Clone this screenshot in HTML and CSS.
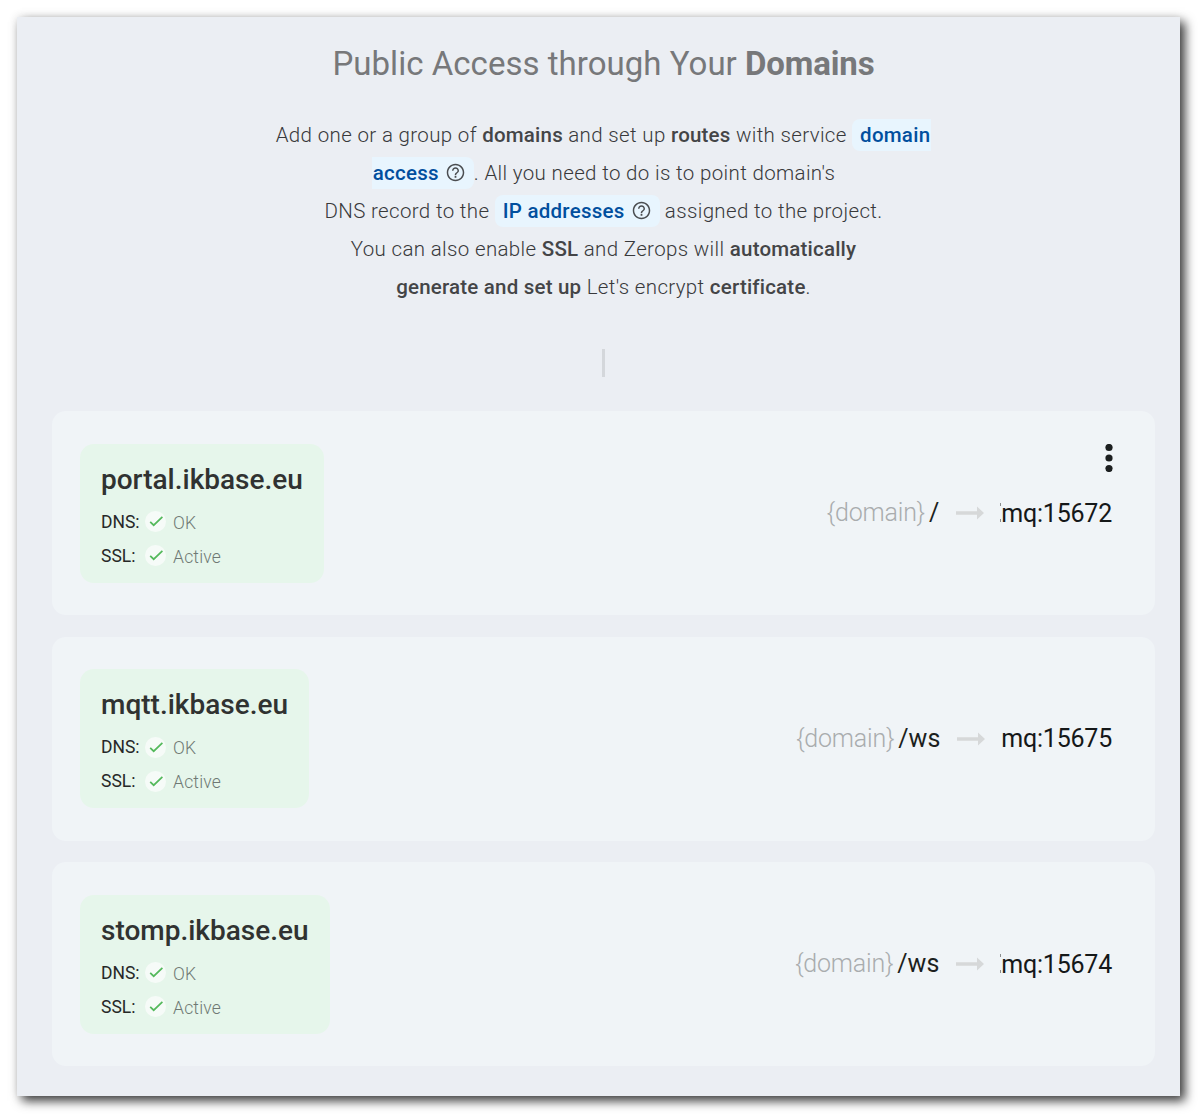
FILE: index.html
```html
<!DOCTYPE html>
<html lang="en">
<head>
<meta charset="utf-8">
<title>Public Access</title>
<link rel="stylesheet" href="styles.css">
</head>
<body>
<svg class="defs" width="0" height="0" aria-hidden="true">
  <symbol id="help" viewBox="0 0 24 24"><path d="M11 18h2v-2h-2v2zm1-16C6.480 2 2 6.480 2 12s4.480 10 10 10 10-4.480 10-10S17.520 2 12 2zm0 18.300c-4.580 0-8.300-3.720-8.300-8.300S7.420 3.700 12 3.700s8.300 3.720 8.300 8.300-3.720 8.300-8.300 8.300zM12 6c-2.210 0-4 1.790-4 4h1.700c0-1.270 1.030-2.300 2.300-2.300s2.300 1.030 2.300 2.300c0 2-3.150 1.750-3.150 5h1.700c0-2.250 3.150-2.500 3.150-5 0-2.210-1.790-4-4-4z"/></symbol>
  <symbol id="check" viewBox="0 0 21 21"><path d="M5.200 10.800 8.700 14.200 17.400 5.800" fill="none" stroke="#54b95c" stroke-width="1.700"/></symbol>
  <symbol id="arrow" viewBox="0 0 28 14"><path d="M0 5.300H21V0.500L28 7 21 13.500V8.700H0Z" fill="#d6d8d9"/></symbol>
</svg>
<main class="panel">
  <h1 class="title">Public Access through Your <b>Domains</b></h1>
  <div class="intro">
    <p class="line">Add one or a group of <b>domains</b> and set up <b>routes</b> with service <span class="chip start">domain</span></p>
    <p class="line"><span class="chip end">access<svg class="help"><use href="#help"/></svg></span>. All you need to do is to point domain's</p>
    <p class="line">DNS record to the <span class="chip">IP addresses<svg class="help"><use href="#help"/></svg></span> assigned to the project.</p>
    <p class="line">You can also enable <b>SSL</b> and Zerops will <b>automatically</b></p>
    <p class="line"><b>generate and set up</b> Let's encrypt <b>certificate</b>.</p>
  </div>
  <div class="divider"></div>
  <div class="cards">
    <section class="card">
      <div class="domain portal">
        <h2>portal.ikbase.eu</h2>
        <div class="status"><span class="label">DNS:</span><svg class="tick"><use href="#check"/></svg><span>OK</span></div>
        <div class="status"><span class="label">SSL:</span><svg class="tick"><use href="#check"/></svg><span>Active</span></div>
      </div>
      <div class="route"><span class="var">{domain}</span><span class="path">/</span><svg class="arrow"><use href="#arrow"/></svg><span class="target cut">mq:15672</span></div>
      <svg class="menu" viewBox="0 0 8 28"><circle cx="4" cy="3.500" r="3.600"/><circle cx="4" cy="14" r="3.600"/><circle cx="4" cy="24.500" r="3.600"/></svg>
    </section>
    <section class="card">
      <div class="domain mqtt">
        <h2>mqtt.ikbase.eu</h2>
        <div class="status"><span class="label">DNS:</span><svg class="tick"><use href="#check"/></svg><span>OK</span></div>
        <div class="status"><span class="label">SSL:</span><svg class="tick"><use href="#check"/></svg><span>Active</span></div>
      </div>
      <div class="route"><span class="var">{domain}</span><span class="path">/ws</span><svg class="arrow"><use href="#arrow"/></svg><span class="target">mq:15675</span></div>
    </section>
    <section class="card">
      <div class="domain stomp">
        <h2>stomp.ikbase.eu</h2>
        <div class="status"><span class="label">DNS:</span><svg class="tick"><use href="#check"/></svg><span>OK</span></div>
        <div class="status"><span class="label">SSL:</span><svg class="tick"><use href="#check"/></svg><span>Active</span></div>
      </div>
      <div class="route"><span class="var">{domain}</span><span class="path">/ws</span><svg class="arrow"><use href="#arrow"/></svg><span class="target cut">mq:15674</span></div>
    </section>
  </div>
</main>
</body>
</html>
```
FILE: styles.css
```css
* { box-sizing: border-box; }
body {
  margin: 0;
  padding: 17px 18px 18px 17px;
  height: 1114px;
  overflow: hidden;
  background: #fff;
  font-family: Roboto, "Liberation Sans", sans-serif;
}
.defs { position: absolute; }
.panel {
  height: 1079px;
  padding: 26px 25px 0 35px;
  background: #ebeef3;
  box-shadow: 5px 5px 10px rgba(0, 0, 0, 0.75), 0 0 10px rgba(0, 0, 0, 0.1);
}
.title {
  margin: 0;
  height: 42px;
  line-height: 42px;
  text-align: center;
  font-size: 33px;
  font-weight: 400;
  letter-spacing: 0.03px;
  color: #77787a;
  white-space: nowrap;
}
.title b { font-weight: 700; letter-spacing: -0.15px; }
.intro {
  margin-top: 31px;
  font-size: 20.500px;
  font-weight: 300;
  letter-spacing: 0.35px;
  color: #38393b;
}
.line {
  margin: 0;
  height: 38px;
  line-height: 38px;
  text-align: center;
  white-space: nowrap;
}
.line b { font-weight: 500; letter-spacing: 0.2px; color: #444547; }
.chip {
  position: relative;
  top: -2px;
  display: inline-flex;
  align-items: center;
  height: 32px;
  padding: 0 8px;
  border-radius: 8px;
  background: #e8f5fe;
  color: #014f9e;
  font-weight: 500;
  letter-spacing: 0.25px;
  line-height: 32px;
  vertical-align: middle;
}
.chip.start { top: -1.500px; padding-right: 1px; border-radius: 8px 0 0 8px; }
.chip.end { padding-left: 1px; border-radius: 0 8px 8px 0; }
.help { width: 21px; height: 21px; margin-left: 6px; fill: #4a4d50; }
.divider {
  width: 3px;
  height: 28px;
  margin: 43px auto 34px;
  background: #d4d7db;
}
.cards { display: flex; flex-direction: column; gap: 21.500px; }
.card {
  position: relative;
  display: flex;
  align-items: center;
  justify-content: space-between;
  height: 204px;
  padding: 0 43px 0 28px;
  border-radius: 14px;
  background: #f0f4f7;
}
.domain {
  height: 139px;
  padding: 16px 21px 0;
  border-radius: 14px;
  background: #e6f6eb;
}
.portal { width: 244px; }
.mqtt { width: 229px; }
.stomp { width: 250px; }
.domain h2 {
  margin: 0 0 8px;
  height: 38px;
  line-height: 40px;
  font-size: 28px;
  font-weight: 500;
  letter-spacing: 0;
  color: #303231;
  white-space: nowrap;
}
.status {
  display: flex;
  align-items: center;
  height: 34px;
  margin-top: -1px;
  line-height: 24px;
  font-size: 17.500px;
  font-weight: 300;
  letter-spacing: 0.2px;
  color: #6f7974;
}
.status > span:last-child { padding-top: 2px; }
.status + .status { margin-top: 0; }
.label { width: 44px; font-weight: 400; letter-spacing: 0; color: #262827; }
.tick { width: 21px; height: 21px; margin-right: 7px; border-radius: 50%; background: #f6fbf8; }
.route { display: flex; align-items: center; font-size: 25px; line-height: 34px; }
.var { font-weight: 300; letter-spacing: -0.15px; color: #a9acae; }
.path { margin-left: 4px; color: #1c1f20; }
.arrow { width: 28px; height: 14px; margin: 0 16px 0 17px; }
.target { position: relative; top: 0.500px; letter-spacing: -0.22px; color: #151819; }
.cut::before {
  content: "";
  display: inline-block;
  width: 1px;
  height: 13px;
  border: solid #8a8d8e;
  border-width: 3px 0;
}
.menu { position: absolute; right: 42px; top: 33px; width: 8px; height: 28px; fill: #1c1f20; }
```
